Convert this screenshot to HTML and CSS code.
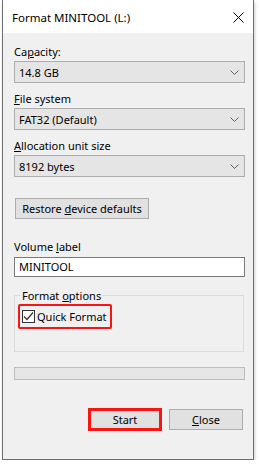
FILE: index.html
```html
<!DOCTYPE html>
<html>
<head>
    <title>Format MINITOOL (L:)</title>
    <link rel="stylesheet" href="styles.css">
</head>
<body>
    <div class="window">
        <div class="titlebar">
            <span class="title">Format MINITOOL (L:)</span>
            <svg class="close-x" width="11" height="11" viewBox="0 0 11 11">
                <path d="M0.5 0.5 L10.5 10.5 M10.5 0.5 L0.5 10.5" stroke="#000" stroke-width="1" fill="none"/>
            </svg>
        </div>

        <div class="content">
            <div class="label">Ca<u>p</u>acity:</div>
            <div class="select">
                <span>14.8 GB</span>
                <svg class="chevron" width="9" height="5" viewBox="0 0 9 5"><path d="M0.5 0.5 L4.5 4.5 L8.5 0.5" stroke="#606060" fill="none"/></svg>
            </div>

            <div class="label"><u>F</u>ile system</div>
            <div class="select">
                <span>FAT32 (Default)</span>
                <svg class="chevron" width="9" height="5" viewBox="0 0 9 5"><path d="M0.5 0.5 L4.5 4.5 L8.5 0.5" stroke="#606060" fill="none"/></svg>
            </div>

            <div class="label"><u>A</u>llocation unit size</div>
            <div class="select">
                <span>8192 bytes</span>
                <svg class="chevron" width="9" height="5" viewBox="0 0 9 5"><path d="M0.5 0.5 L4.5 4.5 L8.5 0.5" stroke="#606060" fill="none"/></svg>
            </div>

            <button class="btn restore">Restore <u>d</u>evice defaults</button>

            <div class="label volume">Volume <u>l</u>abel</div>
            <div class="textbox">MINITOOL</div>

            <fieldset class="options">
                <legend>Format <u>o</u>ptions</legend>
                <div class="check highlight">
                    <span class="box">
                        <svg width="11" height="11" viewBox="0 0 11 11"><path d="M1 5.5 L4 8.5 L10 1.5" stroke="#333" stroke-width="1.2" fill="none"/></svg>
                    </span>
                    <span>Quick Format</span>
                </div>
            </fieldset>

            <div class="progress"></div>

            <div class="actions">
                <button class="btn start">Start</button>
                <button class="btn close"><u>C</u>lose</button>
            </div>
        </div>
    </div>
</body>
</html>
```

FILE: styles.css
```css
html, body {
    margin: 0;
    padding: 0;
    background: #fff;
}
body {
    font-family: "Noto Sans", "Open Sans", sans-serif;
    font-size: 11px;
    line-height: 15px;
    color: #000;
}
.window {
    margin-left: 2px;
    width: 250px;
    height: 459px;
    background: #f0f0f0;
    border: 1px solid #6e6e6e;
    border-top: none;
    box-shadow: 1px 2px 3px rgba(0,0,0,0.2);
}
.titlebar {
    height: 33px;
    background: #fff;
    display: flex;
    align-items: center;
    justify-content: space-between;
    padding: 0 9px 0 9px;
}
.title {
    font-size: 11.5px;
    margin-top: 1px;
}
.close-x {
    margin-top: 2px;
}
.content {
    padding: 11px 8px 0 11px;
}
.label {
    margin-bottom: 2px;
}
.select {
    box-sizing: border-box;
    width: 231px;
    height: 22px;
    background: #e5e5e5;
    border: 1px solid #adadad;
    display: flex;
    align-items: center;
    justify-content: space-between;
    padding: 0 5px 0 4px;
    margin-bottom: 8px;
}
.chevron {
    margin-top: 1px;
}
.btn {
    font-family: inherit;
    font-size: 11px;
    line-height: 15px;
    color: #000;
    background: #e1e1e1;
    border: 1px solid #adadad;
    padding: 0;
    box-sizing: border-box;
}
.restore {
    display: block;
    margin: 21px 0 0 1px;
    width: 134px;
    height: 21px;
}
.volume {
    margin-top: 20px;
    margin-bottom: 3px;
}
.textbox {
    box-sizing: border-box;
    width: 231px;
    height: 20px;
    background: #fff;
    border: 1px solid #7a7a7a;
    padding: 1px 4px 0;
}
.options {
    box-sizing: border-box;
    margin: 11px 0 0 0;
    width: 230px;
    height: 64px;
    border: 1px solid #dcdcdc;
    padding: 1px 0 0 3px;
}
.options legend {
    padding: 0 1px;
    margin-left: 3px;
}
.check {
    display: inline-flex;
    align-items: center;
    gap: 2px;
}
.highlight {
    border: 2px solid #fa1414;
    border-radius: 2px;
    padding: 3px 3px 3px 2px;
}
.box {
    box-sizing: border-box;
    width: 13px;
    height: 13px;
    background: #fff;
    border: 1px solid #333;
    display: flex;
    align-items: center;
    justify-content: center;
}
.progress {
    box-sizing: border-box;
    width: 231px;
    height: 13px;
    margin-top: 15px;
    background: #e6e6e6;
    border: 1px solid #bcbcbc;
}
.actions {
    display: flex;
    justify-content: flex-end;
    align-items: center;
    gap: 7px;
    margin-top: 28px;
    padding-right: 2px;
}
.start {
    width: 74px;
    height: 23px;
    border: 3px solid #fa1414;
}
.close {
    width: 74px;
    height: 21px;
}
```
